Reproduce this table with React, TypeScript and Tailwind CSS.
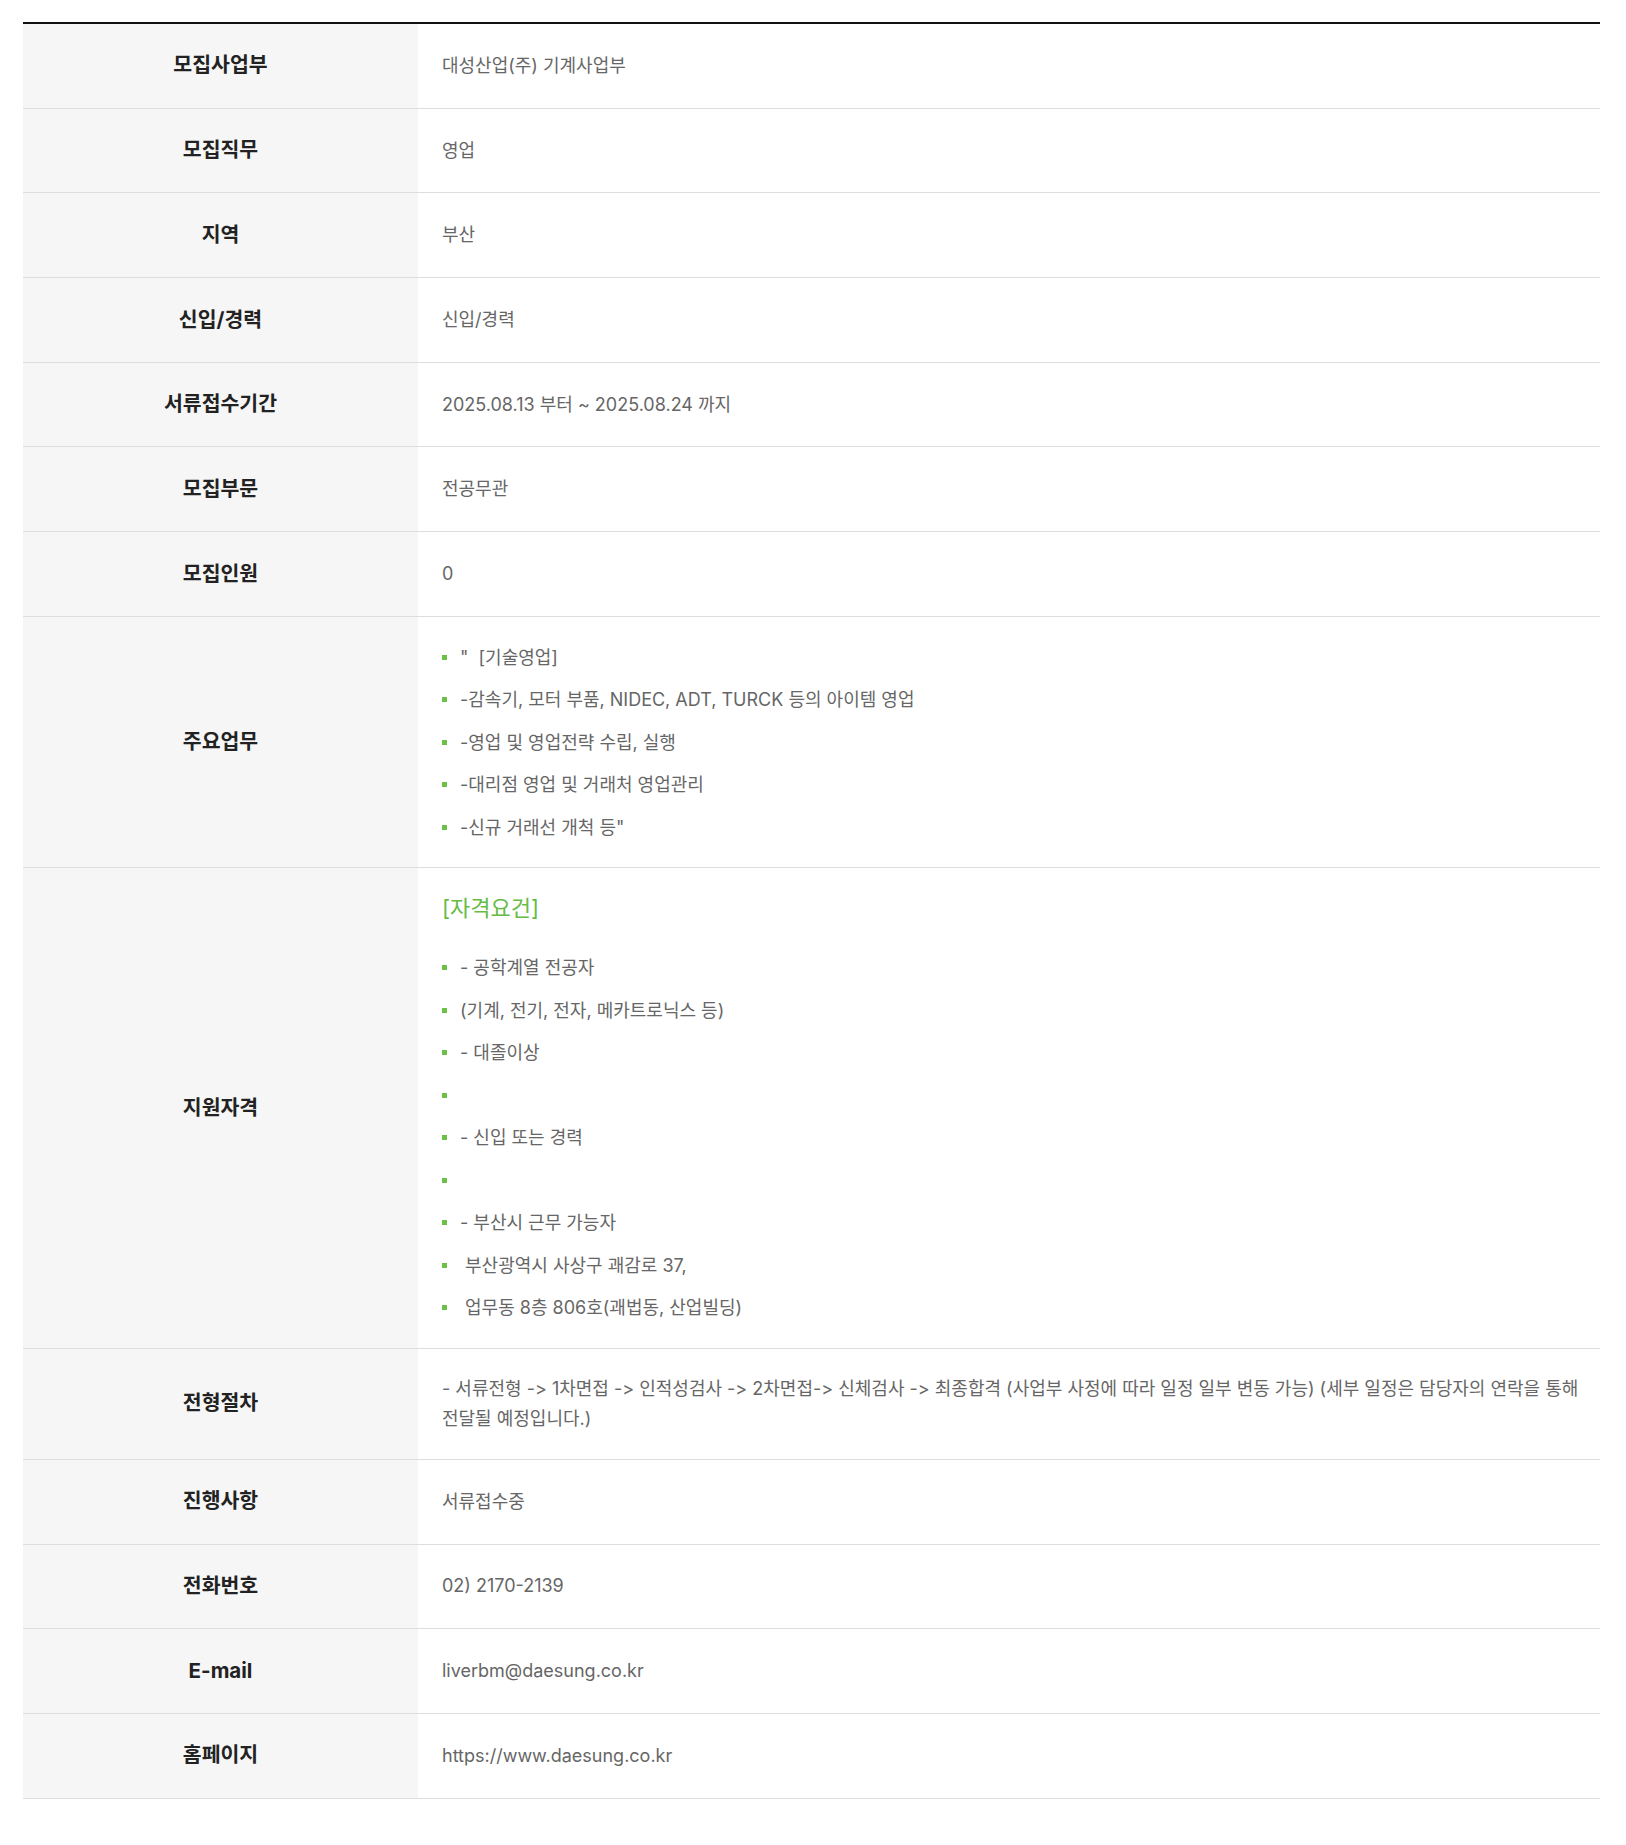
import React from "react";

type Row = {
  label: string;
  value?: string;
  items?: string[];
  heading?: string;
};

const rows: Row[] = [
  { label: "모집사업부", value: "대성산업(주) 기계사업부" },
  { label: "모집직무", value: "영업" },
  { label: "지역", value: "부산" },
  { label: "신입/경력", value: "신입/경력" },
  { label: "서류접수기간", value: "2025.08.13 부터 ~ 2025.08.24 까지" },
  { label: "모집부문", value: "전공무관" },
  { label: "모집인원", value: "0" },
  {
    label: "주요업무",
    items: [
      "\"  [기술영업]",
      "-감속기, 모터 부품, NIDEC, ADT, TURCK 등의 아이템 영업",
      "-영업 및 영업전략 수립, 실행",
      "-대리점 영업 및 거래처 영업관리",
      "-신규 거래선 개척 등\"",
    ],
  },
  {
    label: "지원자격",
    heading: "[자격요건]",
    items: [
      "- 공학계열 전공자",
      "(기계, 전기, 전자, 메카트로닉스 등)",
      "- 대졸이상",
      "",
      "- 신입 또는 경력",
      "",
      "- 부산시 근무 가능자",
      "\u00a0부산광역시 사상구 괘감로 37,",
      "\u00a0업무동 8층 806호(괘법동, 산업빌딩)",
    ],
  },
  {
    label: "전형절차",
    value:
      "- 서류전형 -> 1차면접 -> 인적성검사 -> 2차면접-> 신체검사 -> 최종합격 (사업부 사정에 따라 일정 일부 변동 가능) (세부 일정은 담당자의 연락을 통해 전달될 예정입니다.)",
  },
  { label: "진행사항", value: "서류접수중" },
  { label: "전화번호", value: "02) 2170-2139" },
  { label: "E-mail", value: "liverbm@daesung.co.kr" },
  { label: "홈페이지", value: "https://www.daesung.co.kr" },
];

const BulletList = ({ items }: { items: string[] }) => (
  <ul>
    {items.map((t, i) => (
      <li key={i} className="flex items-center h-[42.5px]">
        <span className="w-[5px] h-[5px] bg-[#6cbf47] shrink-0" />
        <span className="pl-[13px] whitespace-pre">{t}</span>
      </li>
    ))}
  </ul>
);

export default function App() {
  return (
    <div
      className="bg-white min-h-screen pl-[23px] pr-[26px] pt-[22px]"
      style={{ fontFamily: "Inter, 'Noto Sans CJK KR', sans-serif" }}
    >
      <div className="border-t-2 border-[#111]">
        {rows.map((r) => (
          <div key={r.label} className="grid grid-cols-[395px_1fr] border-b border-[#dddddd]">
            <div className="bg-[#f6f6f6] flex items-center justify-center text-[20.5px] font-bold text-[#222]">
              {r.label}
            </div>
            {r.items ? (
              <div className="px-6 py-[19px] text-[18px] text-[#666]">
                {r.heading && (
                  <p className="text-[22px] leading-[42px] text-[#66bb44] mb-[17px]">{r.heading}</p>
                )}
                <BulletList items={r.items} />
              </div>
            ) : (
              <div className="min-h-[83.7px] flex items-center pl-6 pr-4 py-[25px] text-[18px] leading-[30px] text-[#666] break-keep">
                {r.value}
              </div>
            )}
          </div>
        ))}
      </div>
    </div>
  );
}
